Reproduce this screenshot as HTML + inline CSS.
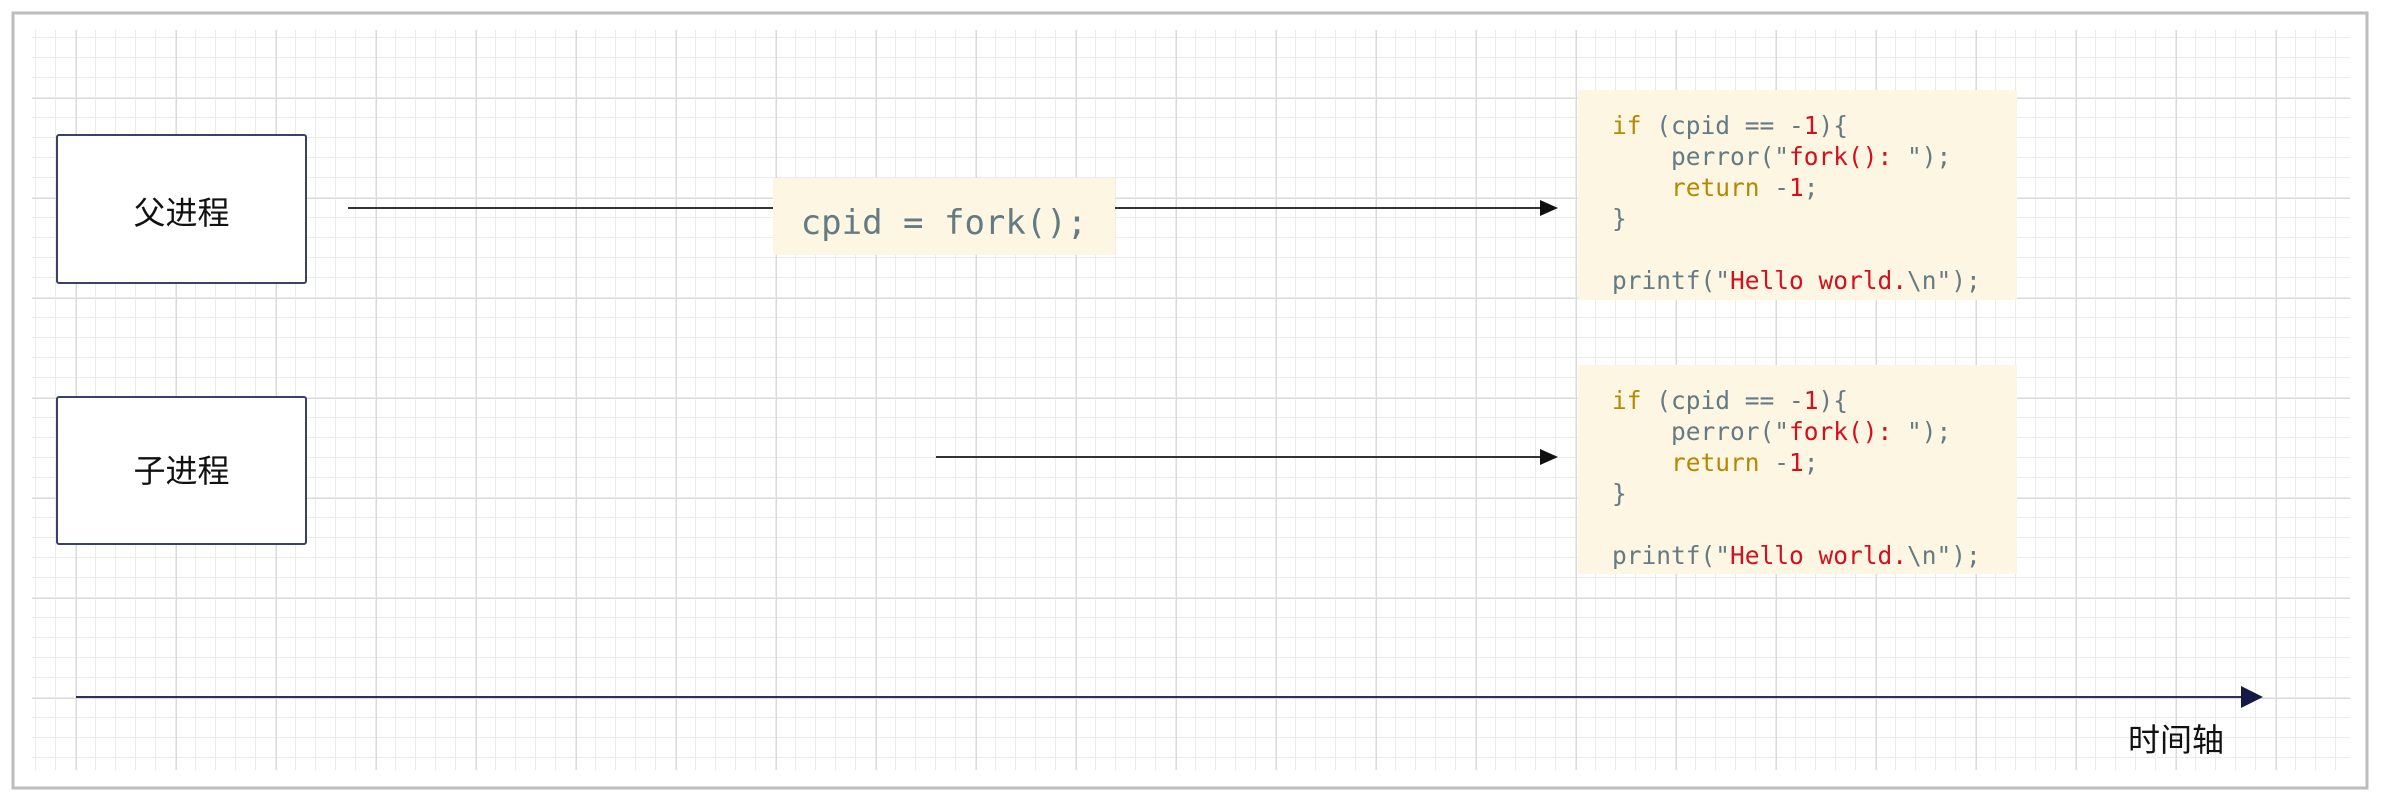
<!DOCTYPE html>
<html><head><meta charset="utf-8"><style>
html,body{margin:0;padding:0;background:#fff;}
svg{display:block}
</style></head><body>
<svg width="2382" height="802" viewBox="0 0 2382 802" xmlns="http://www.w3.org/2000/svg">
<defs>
<pattern id="minor" x="16" y="18" width="20" height="20" patternUnits="userSpaceOnUse">
<path d="M20 0V20M0 20H20" stroke="#ececec" stroke-width="2" fill="none"/>
</pattern>
<pattern id="major" x="76" y="98" width="100" height="100" patternUnits="userSpaceOnUse">
<path d="M0 0V100M0 0H100" stroke="#dadada" stroke-width="2" fill="none"/>
</pattern>
</defs>
<rect x="0" y="0" width="2382" height="802" fill="#fff"/>
<rect x="13" y="13" width="2354" height="775" fill="#fff" stroke="#bdbdbd" stroke-width="3"/>
<rect x="32" y="30" width="2318" height="740" fill="url(#minor)"/>
<rect x="32" y="30" width="2318" height="740" fill="url(#major)"/>

<rect x="57" y="135" width="249" height="148" rx="2" fill="#fff" stroke="#3a4166" stroke-width="2"/>
<text x="181.5" y="224" text-anchor="middle" font-family="Liberation Sans, Noto Sans CJK SC, sans-serif" font-size="32" fill="#111">父进程</text>
<rect x="57" y="397" width="249" height="147" rx="2" fill="#fff" stroke="#3a4166" stroke-width="2"/>
<text x="181.5" y="482" text-anchor="middle" font-family="Liberation Sans, Noto Sans CJK SC, sans-serif" font-size="32" fill="#111">子进程</text>

<line x1="348" y1="208" x2="1542" y2="208" stroke="#333" stroke-width="2"/>
<path d="M1540 200L1558 208L1540 216Z" fill="#111"/>
<rect x="773" y="178" width="342" height="77" fill="#fdf6e3"/>
<text x="944" y="234" text-anchor="middle" font-family="DejaVu Sans Mono, monospace" font-size="34" fill="#657b83">cpid = fork();</text>

<line x1="936" y1="457" x2="1542" y2="457" stroke="#333" stroke-width="2"/>
<path d="M1540 449L1558 457L1540 465Z" fill="#111"/>

<g font-family="DejaVu Sans Mono, monospace" font-size="24.5" fill="#657b83">
<rect x="1578" y="90" width="439" height="210" fill="#fdf6e3"/>
<text x="1612" y="134"><tspan fill="#b58900">if</tspan> (cpid == -<tspan fill="#d3101e">1</tspan>){</text>
<text x="1671" y="165">perror(&quot;<tspan fill="#d3101e">fork(): </tspan>&quot;);</text>
<text x="1671" y="196"><tspan fill="#b58900">return</tspan> -<tspan fill="#d3101e">1</tspan>;</text>
<text x="1612" y="227">}</text>
<text x="1612" y="289">printf(&quot;<tspan fill="#d3101e">Hello world.</tspan>\n&quot;);</text>

<rect x="1578" y="365" width="439" height="209" fill="#fdf6e3"/>
<text x="1612" y="409"><tspan fill="#b58900">if</tspan> (cpid == -<tspan fill="#d3101e">1</tspan>){</text>
<text x="1671" y="440">perror(&quot;<tspan fill="#d3101e">fork(): </tspan>&quot;);</text>
<text x="1671" y="471"><tspan fill="#b58900">return</tspan> -<tspan fill="#d3101e">1</tspan>;</text>
<text x="1612" y="502">}</text>
<text x="1612" y="564">printf(&quot;<tspan fill="#d3101e">Hello world.</tspan>\n&quot;);</text>
</g>

<line x1="76" y1="697" x2="2245" y2="697" stroke="#2a3358" stroke-width="2"/>
<path d="M2241 686L2263 697L2241 708Z" fill="#141a45"/>
<text x="2176" y="751" text-anchor="middle" font-family="Liberation Sans, Noto Sans CJK SC, sans-serif" font-size="32" fill="#111">时间轴</text>
</svg>
</body></html>
